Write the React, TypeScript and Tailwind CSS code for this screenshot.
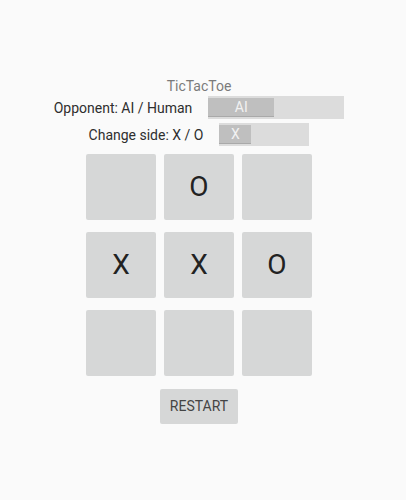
import React from "react";

const board = ["", "O", "", "X", "X", "O", "", "", ""];

function Toggle({ width, thumb, label }: { width: string; thumb: string; label: string }) {
  return (
    <div className={`${width} h-[23px] bg-[#dcdcdc] flex items-center`}>
      <div
        className={`${thumb} h-[19px] bg-[#bfbfbf] border-b border-[#a9a9a9] flex items-center justify-center text-[14px] leading-[16px] text-[#f2f2f2]`}
      >
        {label}
      </div>
    </div>
  );
}

export default function App() {
  return (
    <div className="w-[406px] h-[500px] bg-[#fafafa]" style={{ fontFamily: "Roboto, 'Noto Sans', sans-serif" }}>
      <div className="w-[398px] flex flex-col items-center pt-[78px]">
        <div className="text-[14px] leading-[16px] text-[#7a7a7a]">TicTacToe</div>
        <div className="flex items-center mt-[2px] h-[23px] gap-[16px]">
          <span className="text-[14px] leading-[16px] text-[#2e2e2e]">Opponent: AI / Human</span>
          <Toggle width="w-[136px]" thumb="w-[66px]" label="AI" />
        </div>
        <div className="flex items-center mt-[4px] h-[23px] gap-[16px]">
          <span className="text-[14px] leading-[16px] text-[#2e2e2e]">Change side: X / O</span>
          <Toggle width="w-[90px]" thumb="w-[32px]" label="X" />
        </div>
        <div className="grid grid-cols-3 gap-x-[8px] gap-y-[12px] mt-[8px]">
          {board.map((v, i) => (
            <div
              key={i}
              className="w-[70px] h-[66px] bg-[#d6d7d7] rounded-[2px] flex items-center justify-center text-[28px] text-[#222222]"
            >
              {v}
            </div>
          ))}
        </div>
        <div className="mt-[13px] w-[78px] h-[35px] bg-[#d6d7d7] rounded-[2px] flex items-center justify-center text-[14px] text-[#444444]">
          RESTART
        </div>
      </div>
    </div>
  );
}
